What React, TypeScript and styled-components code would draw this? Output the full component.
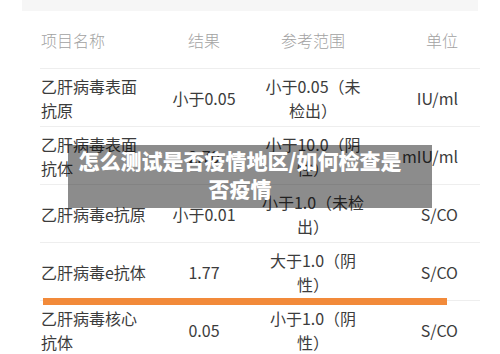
import styled, { createGlobalStyle } from "styled-components";

const GlobalStyle = createGlobalStyle`
  html, body {
    margin: 0;
    padding: 0;
    background: #ffffff;
  }
  body {
    font-family: "Noto Sans CJK SC", "Noto Sans", sans-serif;
  }
`;

type Align = "left" | "center" | "right";

const rows = [
  { name: "乙肝病毒表面抗原", result: "小于0.05", range: "小于0.05（未检出）", unit: "IU/ml" },
  { name: "乙肝病毒表面抗体", result: "2.70", range: "小于10.0（阴性）", unit: "mIU/ml" },
  { name: "乙肝病毒e抗原", result: "小于0.01", range: "小于1.0（未检出）", unit: "S/CO" },
  { name: "乙肝病毒e抗体", result: "1.77", range: "大于1.0（阴性）", unit: "S/CO", bar: 0.918 },
  { name: "乙肝病毒核心抗体", result: "0.05", range: "小于1.0（阴性）", unit: "S/CO" },
];

const App = () => {
  return (
    <Page>
      <GlobalStyle />
      <TopBand />
      <Table>
        <HeaderRow>
          <Cell align="left">项目名称</Cell>
          <Cell align="center">结果</Cell>
          <Cell align="center">参考范围</Cell>
          <Cell align="right">单位</Cell>
        </HeaderRow>
        {rows.map((row, idx) => (
          <Row key={idx}>
            <Cell align="left">{row.name}</Cell>
            <Cell align="center">{row.result}</Cell>
            <Cell align="center">
              <RangeText>{row.range}</RangeText>
            </Cell>
            <Cell align="right">{row.unit}</Cell>
            {row.bar && <Progress style={{ width: `${row.bar * 100}%` }} />}
          </Row>
        ))}
      </Table>
      <Banner>
        <BannerText>怎么测试是否疫情地区/如何检查是否疫情</BannerText>
      </Banner>
    </Page>
  );
};

export default App;

const Page = styled.div`
  position: relative;
  width: 500px;
  height: 354px;
  overflow: hidden;
  background: #ffffff;
`;

const TopBand = styled.div`
  height: 11px;
  margin: 0 22px;
  background: #f6f6f6;
`;

const Table = styled.div`
  margin-left: 40px;
  width: 440px;
`;

const HeaderRow = styled.div`
  display: grid;
  grid-template-columns: 109px 110px 108px 1fr;
  align-items: center;
  height: 57px;
  border-bottom: 1px solid #eeeeee;
  color: #a2a2a2;
  font-size: 16px;
  font-weight: 300;
`;

const Row = styled.div`
  position: relative;
  display: grid;
  grid-template-columns: 109px 110px 108px 1fr;
  align-items: center;
  height: 57px;
  border-bottom: 1px solid #eeeeee;
  color: #3c3c3c;
  font-size: 16px;
  line-height: 24px;
`;

const Cell = styled.div<{ align: Align }>`
  padding-left: ${({ align }) => (align === "left" ? "1px" : "0")};
  padding-right: ${({ align }) => (align === "right" ? "22px" : "0")};
  text-align: ${({ align }) => align};
  display: flex;
  justify-content: ${({ align }) =>
    align === "left" ? "flex-start" : align === "right" ? "flex-end" : "center"};
`;

const RangeText = styled.div`
  max-width: 104px;
  text-align: center;
`;

const Progress = styled.div`
  position: absolute;
  left: 3px;
  bottom: -5px;
  height: 7px;
  background: #f28a3a;
`;

const Banner = styled.div`
  position: absolute;
  left: 68px;
  top: 145px;
  width: 364px;
  height: 63px;
  box-sizing: border-box;
  padding: 1px 27px 0 7px;
  background: rgba(0, 0, 0, 0.45);
`;

const BannerText = styled.div`
  color: #ffffff;
  font-size: 21px;
  font-weight: 900;
  line-height: 28px;
  text-align: center;
`;
